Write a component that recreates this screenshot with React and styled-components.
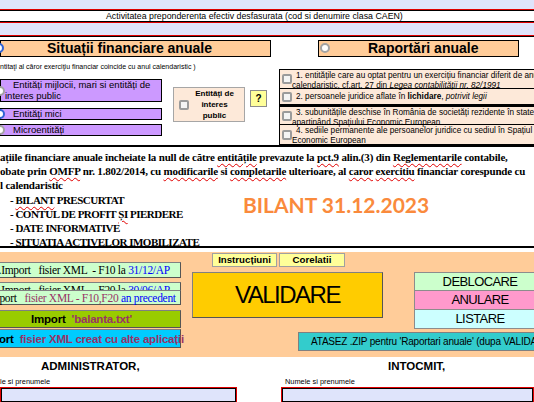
import React from "react";
import styled, { createGlobalStyle } from "styled-components";

const PEACH = "#ffcc99";
const LIGHT_PEACH = "#fde9d9";
const LAVENDER = "#dfe4fb";
const WINE = "#993366";

const GlobalStyle = createGlobalStyle`
  html, body {
    margin: 0;
    padding: 0;
    background: #fff;
  }
  body {
    font-family: "Liberation Sans", Arial, sans-serif;
    color: #000;
  }
  #root {
    width: 534px;
    height: 402px;
    overflow: hidden;
  }
`;

const Page = styled.div`
  width: 534px;
  height: 402px;
  overflow: hidden;
  display: flex;
  flex-direction: column;
  background: #fff;
`;

/* ---------- top band ---------- */

const TopBand = styled.div`
  background: ${LAVENDER};
  padding: 9px 0 12px;
  border-bottom: 1px solid #e00000;
  box-shadow: 0 1px 0 #000;
`;

const ActivityField = styled.div`
  border-top: 1px solid #e00000;
  border-bottom: 1px solid #e00000;
`;

const ActivityInner = styled.div`
  height: 10px;
  background: #fff;
  border-top: 1px solid #000;
  border-bottom: 1px solid #000;
  padding-left: 106px;
  font-size: 8.8px;
  line-height: 10px;
  white-space: nowrap;
`;

/* ---------- statement types ---------- */

const TypesSection = styled.div`
  display: flex;
  height: 109px;
  box-sizing: border-box;
  padding-top: 4px;
`;

const LeftCol = styled.div`
  width: 271px;
  flex: none;
`;

const RightCol = styled.div`
  margin-left: 8px;
  flex: 1;
  min-width: 0;
`;

const HeaderBox = styled.div`
  position: relative;
  height: 17px;
  box-sizing: border-box;
  width: ${(p) => p.$width}px;
  margin-left: ${(p) => p.$offset || 0}px;
  border: 1px solid #000;
  background: ${PEACH};
  padding-left: ${(p) => p.$pad}px;
  font-weight: bold;
  font-size: 14px;
  line-height: 15px;
  white-space: nowrap;
`;

const Radio = styled.span`
  position: absolute;
  left: ${(p) => p.$x}px;
  top: ${(p) => p.$y}px;
  width: 10px;
  height: 10px;
  box-sizing: border-box;
  border-radius: 50%;
  background: #fff;
  border: 2px solid ${(p) => (p.$on ? "#2f63d6" : "#a3a3a3")};
`;

const Note = styled.div`
  margin-top: 5px;
  font-size: 7px;
  line-height: 9px;
  white-space: nowrap;
`;

const OptionsRow = styled.div`
  display: flex;
  align-items: flex-start;
  margin-top: 8px;
`;

const PurpleStack = styled.div`
  width: 162px;
  flex: none;
  display: flex;
  flex-direction: column;
`;

const PurpleBox = styled.div`
  position: relative;
  height: ${(p) => p.$h}px;
  margin-top: ${(p) => p.$mt || 0}px;
  box-sizing: border-box;
  background: #cc99ff;
  border: 1px solid #000;
  padding-left: 4px;
  text-indent: 8px;
  font-size: 9.5px;
  line-height: 10.5px;
  white-space: nowrap;
`;

const Card = styled.div`
  margin: 8px 0 0 11px;
  width: 72px;
  height: 35px;
  box-sizing: border-box;
  border: 1px solid #a6a6a6;
  background: ${LIGHT_PEACH};
  display: flex;
  align-items: center;
  padding: 0 4px 0 5px;
`;

const CardText = styled.div`
  flex: 1;
  text-align: center;
  font-weight: bold;
  font-size: 8px;
  line-height: 11px;
`;

const Check = styled.span`
  flex: none;
  display: block;
  width: 10px;
  height: 10px;
  box-sizing: border-box;
  border: 2px solid #9b9b9b;
  border-radius: 2px;
  background: #f4f4f4;
`;

const Question = styled.div`
  margin: 11px 0 0 5px;
  width: 17px;
  height: 17px;
  box-sizing: border-box;
  border: 1px solid #8c8c8c;
  background: #ffff99;
  display: flex;
  align-items: center;
  justify-content: center;
  font-weight: bold;
  font-size: 10px;
`;

const Rows = styled.div`
  margin-top: 12px;
  width: 270px;
  border-top: 1px solid #000;
`;

const Row = styled.div`
  display: flex;
  align-items: ${(p) => (p.$single ? "center" : "flex-start")};
  height: ${(p) => p.$h}px;
  box-sizing: border-box;
  background: ${LIGHT_PEACH};
  border-left: 1px solid #000;
  border-bottom: ${(p) => p.$bb || 1}px solid #000;
  font-size: 8.2px;
  line-height: 9.5px;
  white-space: nowrap;
`;

const RowCheck = styled(Check)`
  align-self: center;
  margin: 0 0 0 2px;
`;

const RowText = styled.div`
  padding-top: ${(p) => (p.$single ? 0 : 1)}px;
  text-indent: 4px;
`;

const Divider = styled.div`
  height: 2px;
  background: #000;
  flex: none;
`;

/* ---------- legal text ---------- */

const TextBlock = styled.div`
  height: 99px;
  flex: none;
  overflow: hidden;
  padding-top: 3px;
  box-sizing: border-box;
  font-family: "Liberation Serif", "Times New Roman", serif;
  font-weight: bold;
  font-size: 11px;
  letter-spacing: -0.2px;
  line-height: 14.2px;
  white-space: nowrap;
`;

const Line = styled.div`
  padding-left: ${(p) => p.$indent || 0}px;
`;

const Spell = styled.span`
  text-decoration: underline wavy #e00000;
  text-decoration-thickness: 1px;
  text-underline-offset: 2px;
`;

const ListArea = styled.div`
  display: flex;
  align-items: flex-start;
`;

const ListCol = styled.div`
  width: 243px;
  flex: none;
  letter-spacing: -0.5px;
`;

const BigTitle = styled.div`
  margin-top: 1px;
  font-family: Lato, "Open Sans", sans-serif;
  font-weight: bold;
  font-size: 21px;
  line-height: 22px;
  letter-spacing: 0;
  color: #fa8a3c;
`;

/* ---------- action panel ---------- */

const Panel = styled.div`
  margin-top: 4px;
  height: 105px;
  flex: none;
  background: ${PEACH};
  display: flex;
  overflow: hidden;
`;

const ImportCol = styled.div`
  margin-left: -18px;
  width: 199px;
  flex: none;
  padding-top: 10px;
  display: flex;
  flex-direction: column;
`;

const ImportBtn = styled.div`
  height: ${(p) => p.$h}px;
  margin-top: ${(p) => p.$mt || 0}px;
  box-sizing: border-box;
  background: ${(p) => p.$bg};
  border: 1px solid #808080;
  border-right-color: #555;
  border-bottom-color: #555;
  display: flex;
  align-items: center;
  justify-content: center;
  font-family: ${(p) =>
    p.$sans
      ? '"Liberation Sans", Arial, sans-serif'
      : '"Liberation Serif", "Times New Roman", serif'};
  font-weight: ${(p) => (p.$sans ? "bold" : "normal")};
  font-size: 11.5px;
  letter-spacing: ${(p) => (p.$sans ? -0.2 : -0.3)}px;
  line-height: 14px;
`;

const BtnLabel = styled.span`
  white-space: pre;
`;

const Blue = styled.span`
  color: #0000ff;
`;

const Wine = styled.span`
  color: ${WINE};
`;

const ActionArea = styled.div`
  margin-left: 11px;
  flex: 1;
  display: flex;
  flex-direction: column;
`;

const ActionTop = styled.div`
  display: flex;
  align-items: flex-start;
`;

const MidCol = styled.div`
  width: 191px;
  flex: none;
`;

const Tabs = styled.div`
  display: flex;
  gap: 2px;
  margin: 1px 0 0 20px;
`;

const Tab = styled.div`
  width: ${(p) => p.$w}px;
  height: 14px;
  box-sizing: border-box;
  background: #ffff99;
  border: 1px solid #a0a0a0;
  text-align: center;
  font-weight: bold;
  font-size: 9.7px;
  line-height: 12px;
`;

const Validate = styled.div`
  margin-top: 5px;
  height: 46px;
  box-sizing: border-box;
  background: #ffcc00;
  border: 1px solid #808080;
  border-right-color: #555;
  border-bottom-color: #555;
  display: flex;
  align-items: center;
  justify-content: center;
  font-size: 24px;
  letter-spacing: -1.5px;
`;

const StateCol = styled.div`
  margin-left: 31px;
  width: 132px;
  flex: none;
  padding-top: 20px;
`;

const StateBtn = styled.div`
  height: 19px;
  box-sizing: border-box;
  background: ${(p) => p.$bg};
  border: 1px solid #8c8c8c;
  border-top-width: ${(p) => (p.$first ? 1 : 0)}px;
  text-align: center;
  font-size: 13px;
  letter-spacing: -0.6px;
  line-height: 18px;
`;

const AttachBtn = styled.div`
  margin: 3px 0 0 106px;
  width: 260px;
  height: 19px;
  box-sizing: border-box;
  background: #33cccc;
  border: 1px solid #808080;
  padding-left: 12px;
  font-size: 10px;
  letter-spacing: -0.2px;
  line-height: 17px;
  white-space: nowrap;
`;

/* ---------- signatures ---------- */

const Signatures = styled.div`
  display: flex;
  flex: 1;
`;

const SignCol = styled.div`
  width: ${(p) => (p.$w ? `${p.$w}px` : "auto")};
  flex: ${(p) => (p.$w ? "none" : 1)};
  margin-left: ${(p) => p.$ml || 0}px;
`;

const SignTitle = styled.div`
  margin-top: 2px;
  padding-left: ${(p) => p.$pad}px;
  font-weight: bold;
  font-size: 11.5px;
  line-height: 14px;
  white-space: nowrap;
`;

const SignLabel = styled.div`
  margin-top: 4px;
  padding-left: ${(p) => p.$pad || 0}px;
  font-size: 7.4px;
  line-height: 9px;
  white-space: nowrap;
`;

const SignInput = styled.div`
  margin-top: 1px;
  height: 16px;
  box-sizing: border-box;
  border: 1px solid #e00000;
  box-shadow: inset 0 0 0 1px #000;
  background: ${LAVENDER};
`;

export default function App() {
  return (
    <Page>
      <GlobalStyle />

      <TopBand>
        <ActivityField>
          <ActivityInner>
            Activitatea preponderenta efectiv desfasurata (cod si denumire clasa CAEN)
          </ActivityInner>
        </ActivityField>
      </TopBand>

      <TypesSection>
        <LeftCol>
          <HeaderBox $width={271} $pad={46}>
            <Radio $x={-7} $y={2} $on />
            Situații financiare anuale
          </HeaderBox>
          <Note>
            ntitaţi al căror exerciţiu financiar coincide cu anul calendaristic )
          </Note>
          <OptionsRow>
            <PurpleStack>
              <PurpleBox $h={23}>
                <Radio $x={-6} $y={6} />
                Entități mijlocii, mari si entități de
                <br />
                interes public
              </PurpleBox>
              <PurpleBox $h={12} $mt={6}>
                <Radio $x={-6} $y={0} $on />
                Entități mici
              </PurpleBox>
              <PurpleBox $h={12} $mt={4}>
                <Radio $x={-6} $y={0} />
                Microentități
              </PurpleBox>
            </PurpleStack>
            <Card>
              <Check />
              <CardText>
                Entități de
                <br />
                interes
                <br />
                public
              </CardText>
            </Card>
            <Question>?</Question>
          </OptionsRow>
        </LeftCol>

        <RightCol>
          <HeaderBox $width={201} $offset={39} $pad={49}>
            <Radio $x={1} $y={2} />
            Raportări anuale
          </HeaderBox>
          <Rows>
            <Row $h={19}>
              <RowCheck />
              <RowText>
                1. entitățile care au optat pentru un exercițiu financiar diferit de anul
                <br />
                calendaristic, cf.art. 27 din <i>Legea contabilității nr. 82/1991</i>
              </RowText>
            </Row>
            <Row $h={18} $bb={3} $single>
              <RowCheck />
              <RowText $single>
                2. persoanele juridice aflate în <b>lichidare</b>, <i>potrivit legii</i>
              </RowText>
            </Row>
            <Row $h={18}>
              <RowCheck />
              <RowText>
                3. subunitățile deschise în România de societăți rezidente în state
                <br />
                apartinând Spațiului Economic European
              </RowText>
            </Row>
            <Row $h={20}>
              <RowCheck />
              <RowText>
                4. sediile permanente ale persoanelor juridice cu sediul în Spațiul
                <br />
                Economic European
              </RowText>
            </Row>
          </Rows>
        </RightCol>
      </TypesSection>

      <Divider />

      <TextBlock>
        <Line>
          ațiile financiare anuale încheiate la null de către <Spell>entitățile</Spell>{" "}
          prevazute la <Spell>pct.9</Spell> alin.(3) din <Spell>Reglementarile</Spell>{" "}
          contabile,
        </Line>
        <Line>
          obate prin <Spell>OMFP</Spell> nr. 1.802/2014, cu <Spell>modificarile</Spell> si{" "}
          <Spell>completarile</Spell> ulterioare, al <Spell>caror</Spell>{" "}
          <Spell>exercitiu</Spell> financiar corespunde cu
        </Line>
        <Line>l calendaristic</Line>
        <ListArea>
          <ListCol>
            <Line $indent={10}>
              - <Spell>BILANT</Spell> PRESCURTAT
            </Line>
            <Line $indent={10}>
              - CONTUL DE PROFIT <Spell>ȘI</Spell> PIERDERE
            </Line>
            <Line $indent={10}>- DATE INFORMATIVE</Line>
            <Line $indent={10}>- SITUATIA ACTIVELOR IMOBILIZATE</Line>
          </ListCol>
          <BigTitle>BILANT 31.12.2023</BigTitle>
        </ListArea>
      </TextBlock>

      <Divider />

      <Panel>
        <ImportCol>
          <ImportBtn $h={16} $bg="#ccffcc">
            <BtnLabel>
              {"1.Import   fisier XML  - F10 la "}
              <Blue>31/12/AP</Blue>
            </BtnLabel>
          </ImportBtn>
          <ImportBtn $h={16} $mt={4} $bg="#ccffcc">
            <BtnLabel>
              {"2.Import   fisier XML  - F20 la "}
              <Blue>30/06/AP</Blue>
            </BtnLabel>
          </ImportBtn>
          <ImportBtn $h={15} $mt={-8} $bg="#ccffcc">
            <BtnLabel>
              {"Import   "}
              <Wine>fisier XML - F10,F20</Wine>
              {" "}
              <Blue>an precedent</Blue>
            </BtnLabel>
          </ImportBtn>
          <ImportBtn $h={18} $mt={5} $bg="#99cc00" $sans>
            <BtnLabel>
              {"Import  "}
              <Wine>'balanta.txt'</Wine>
            </BtnLabel>
          </ImportBtn>
          <ImportBtn $h={19} $mt={1} $bg="#00ccff" $sans>
            <BtnLabel>
              {"Import  "}
              <Wine>fisier XML creat cu alte aplicații</Wine>
            </BtnLabel>
          </ImportBtn>
        </ImportCol>

        <ActionArea>
          <ActionTop>
            <MidCol>
              <Tabs>
                <Tab $w={65}>Instrucțiuni</Tab>
                <Tab $w={66}>Corelatii</Tab>
              </Tabs>
              <Validate>VALIDARE</Validate>
            </MidCol>
            <StateCol>
              <StateBtn $bg="#ccffcc" $first>
                DEBLOCARE
              </StateBtn>
              <StateBtn $bg="#ff99cc">ANULARE</StateBtn>
              <StateBtn $bg="#ccffff">LISTARE</StateBtn>
            </StateCol>
          </ActionTop>
          <AttachBtn>ATASEZ .ZIP pentru 'Raportari anuale' (dupa VALIDARE)</AttachBtn>
        </ActionArea>
      </Panel>

      <Signatures>
        <SignCol $w={237}>
          <SignTitle $pad={41}>ADMINISTRATOR,</SignTitle>
          <SignLabel>le si prenumele</SignLabel>
          <SignInput />
        </SignCol>
        <SignCol $ml={44}>
          <SignTitle $pad={107}>INTOCMIT,</SignTitle>
          <SignLabel $pad={4}>Numele si prenumele</SignLabel>
          <SignInput />
        </SignCol>
      </Signatures>
    </Page>
  );
}
